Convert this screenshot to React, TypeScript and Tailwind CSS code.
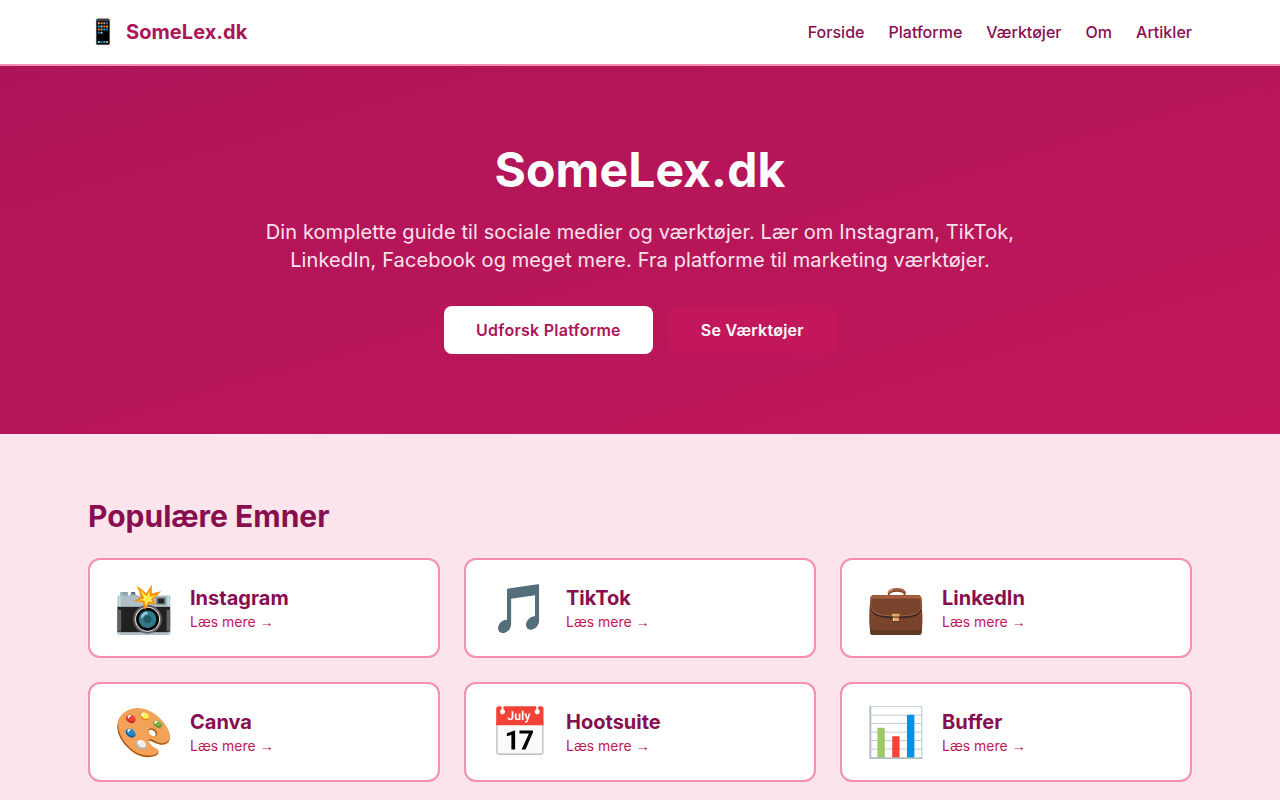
const navLinks = ["Forside", "Platforme", "Værktøjer", "Om", "Artikler"];

const topics = [
  { icon: "📸", name: "Instagram" },
  { icon: "🎵", name: "TikTok" },
  { icon: "💼", name: "LinkedIn" },
  { icon: "🎨", name: "Canva" },
  { icon: "📅", name: "Hootsuite" },
  { icon: "📊", name: "Buffer" },
];

export default function App() {
  return (
    <div className="h-[800px] overflow-hidden bg-[#fce4ec] font-['Inter',sans-serif]">
      {/* Header */}
      <header className="border-b-2 border-[#f48fb1] bg-white">
        <div className="mx-auto flex h-16 max-w-[1104px] items-center justify-between">
          <a href="#" className="flex items-center gap-2 text-xl font-bold tracking-[0.05px] text-[#ad1457]">
            <span className="text-2xl">📱</span>
            SomeLex.dk
          </a>
          <nav className="flex gap-6 tracking-[0.015px]">
            {navLinks.map((link) => (
              <a key={link} href="#" className="text-base font-medium text-[#880e4f]">
                {link}
              </a>
            ))}
          </nav>
        </div>
      </header>

      {/* Hero */}
      <section className="bg-gradient-to-br from-[#ad1457] to-[#c2185b] py-20 text-center">
        <h1 className="text-5xl font-bold tracking-[0.1px] text-white">SomeLex.dk</h1>
        <p className="mx-auto mt-6 max-w-[800px] text-xl leading-7 tracking-[0.1px] text-[#fce4ec]">
          Din komplette guide til sociale medier og værktøjer. Lær om Instagram, TikTok, LinkedIn,
          Facebook og meget mere. Fra platforme til marketing værktøjer.
        </p>
        <div className="mt-8 flex justify-center gap-4 tracking-[0.25px]">
          <a href="#" className="rounded-lg bg-white px-8 py-3 font-semibold text-[#ad1457]">
            Udforsk Platforme
          </a>
          <a href="#" className="rounded-lg bg-[#c2185b] px-8 py-3 font-semibold text-white">
            Se Værktøjer
          </a>
        </div>
      </section>

      {/* Topics */}
      <main className="mx-auto max-w-[1104px] pt-16">
        <h2 className="mb-6 text-3xl font-bold text-[#880e4f]">Populære Emner</h2>
        <div className="grid grid-cols-3 gap-6">
          {topics.map((topic) => (
            <a
              key={topic.name}
              href="#"
              className="flex h-[100px] items-center gap-4 rounded-xl border-2 border-[#f48fb1] bg-white px-6"
            >
              <span className="text-5xl">{topic.icon}</span>
              <div>
                <h3 className="text-xl font-bold text-[#880e4f]">{topic.name}</h3>
                <span className="block text-sm text-[#c2185b]">
                  Læs mere <span className="font-['Liberation_Sans',sans-serif]">→</span>
                </span>
              </div>
            </a>
          ))}
        </div>
      </main>
    </div>
  );
}
